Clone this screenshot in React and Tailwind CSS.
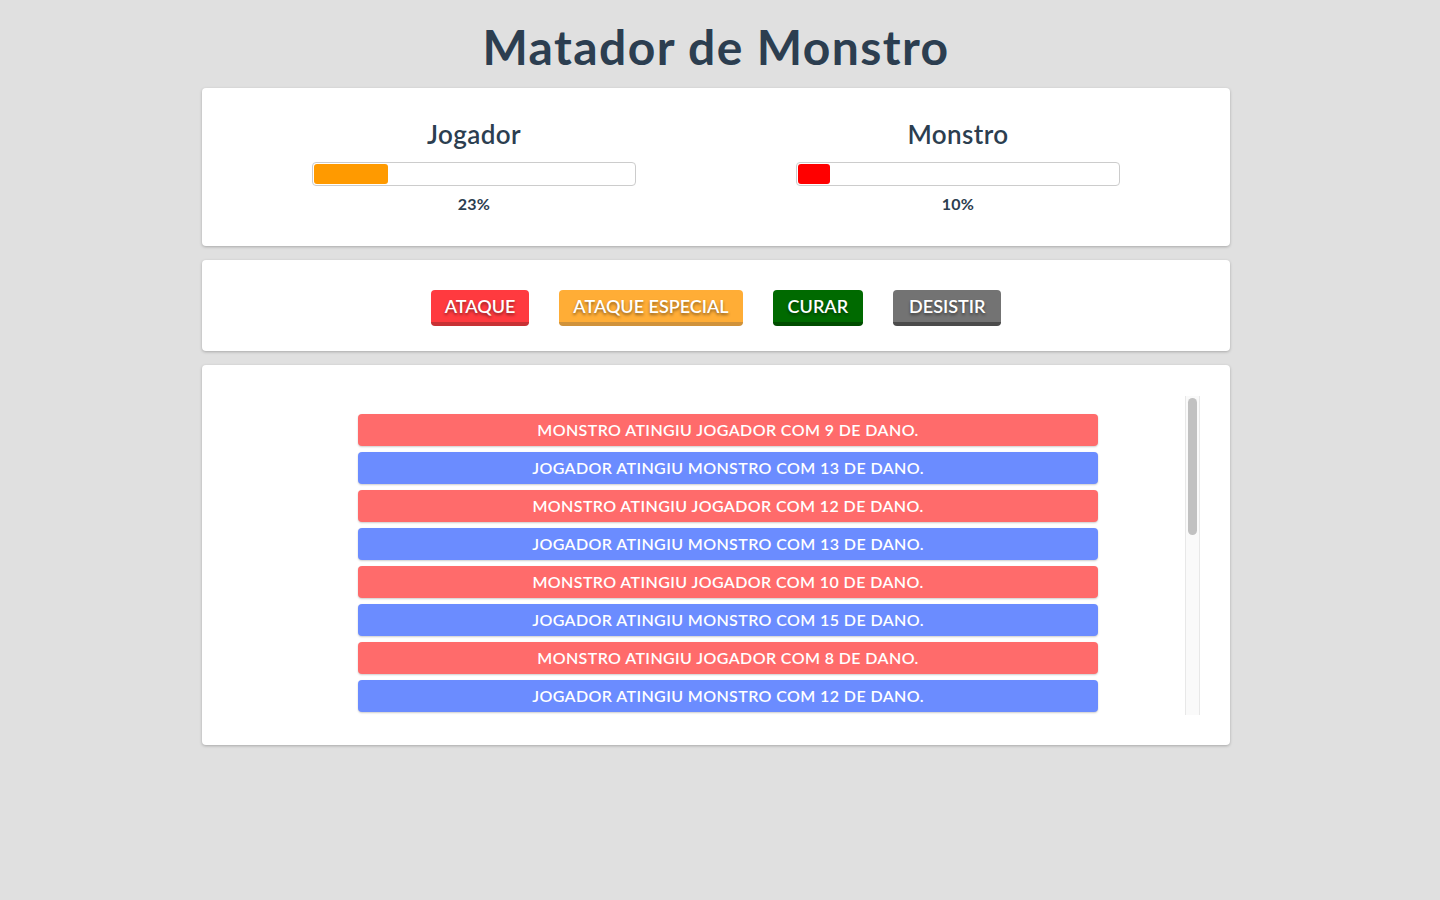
import React from "react";

const logs = [
  ["m", 9], ["j", 13], ["m", 12], ["j", 13], ["m", 10], ["j", 15], ["m", 8], ["j", 12],
  ["m", 7], ["j", 11], ["m", 12], ["j", 9], ["m", 6], ["j", 14], ["m", 11], ["j", 10],
  ["m", 9], ["j", 12],
];

function Bar({ label, pct, color }) {
  return (
    <div className="flex flex-col items-center">
      <h2 className="text-[26px] font-semibold text-[#2c3e50] leading-none mt-[10px] tracking-[0.4px]">{label}</h2>
      <div className="w-[324px] h-[24px] mt-[15px] border border-[#cccccc] rounded-[4px] bg-white p-[1px]">
        <div className={`h-full rounded-[3px] ${color}`} style={{ width: `${pct}%` }} />
      </div>
      <div className="mt-[10px] text-[16px] font-bold text-[#2c3e50] leading-none tracking-[0.2px]">{pct}%</div>
    </div>
  );
}

function Btn({ children, cls }) {
  return (
    <button
      className={`h-[36px] rounded-[4px] border-b-4 text-white text-[18px] font-semibold leading-none [text-shadow:0_2px_3px_rgba(0,0,0,0.45)] ${cls}`}
    >
      {children}
    </button>
  );
}

export default function App() {
  return (
    <div
      className="min-h-[900px] bg-[#e0e0e0] flex flex-col items-center pr-[8px]"
      style={{ fontFamily: "Lato, 'Noto Sans', sans-serif" }}
    >
      <h1 className="mt-[17px] text-[48px] font-bold text-[#2c3e50] leading-[60px] tracking-[1.4px]">
        Matador de Monstro
      </h1>

      <div className="mt-[11px] w-[1028px] h-[158px] bg-white rounded-[4px] shadow-[0_1px_3px_rgba(0,0,0,0.25)] px-[30px] pt-[23px] grid grid-cols-2">
        <Bar label="Jogador" pct={23} color="bg-[#ff9a00]" />
        <Bar label="Monstro" pct={10} color="bg-[#ff0000]" />
      </div>

      <div className="mt-[14px] w-[1028px] h-[91px] bg-white rounded-[4px] shadow-[0_1px_3px_rgba(0,0,0,0.25)] flex items-center justify-center gap-[30px] pt-[5px]">
        <Btn cls="px-[14px] bg-[#ff3a3f] border-[#c83134]">ATAQUE</Btn>
        <Btn cls="px-[14px] bg-[#ffad36] border-[#d0923a]">ATAQUE ESPECIAL</Btn>
        <Btn cls="px-[15px] bg-[#006a00] border-[#004d00]">CURAR</Btn>
        <Btn cls="px-[16px] bg-[#737373] border-[#4b4b4b]">DESISTIR</Btn>
      </div>

      <div className="mt-[14px] w-[1028px] h-[380px] bg-white rounded-[4px] shadow-[0_1px_3px_rgba(0,0,0,0.25)] px-[30px] pt-[31px] pb-[30px]">
        <div className="h-[319px] flex">
          <div className="flex-1 overflow-hidden">
            <ul className="pl-[39px] pt-[18px] flex flex-col gap-[6px] pb-[16px]">
              {logs.map(([who, dmg], i) => (
                <li
                  key={i}
                  className={`mx-auto w-[740px] h-[32px] shrink-0 rounded-[4px] flex items-center justify-center text-white text-[16px] font-semibold tracking-[0.4px] shadow-[0_1px_2px_rgba(0,0,0,0.2)] ${
                    who === "m" ? "bg-[#ff6b6b]" : "bg-[#6b8cff]"
                  }`}
                >
                  {who === "m"
                    ? `MONSTRO ATINGIU JOGADOR COM ${dmg} DE DANO.`
                    : `JOGADOR ATINGIU MONSTRO COM ${dmg} DE DANO.`}
                </li>
              ))}
            </ul>
          </div>
          <div className="w-[15px] h-full bg-[#fafafa] border-x border-[#e8e8e8] px-[2px] pt-[2px]">
            <div className="h-[137px] w-full rounded-full bg-[#c1c1c1]" />
          </div>
        </div>
      </div>
    </div>
  );
}
